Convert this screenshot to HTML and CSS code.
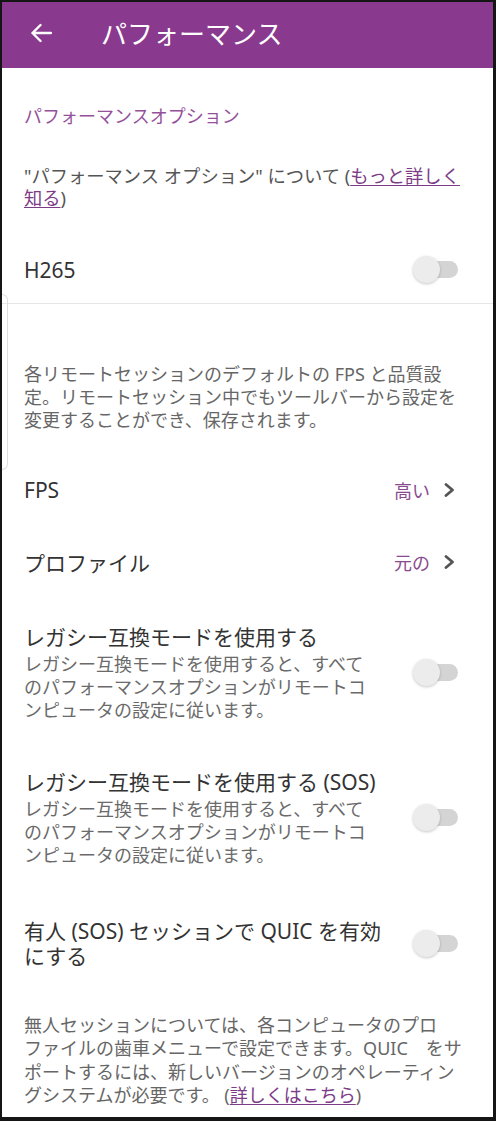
FILE: index.html
```html
<!DOCTYPE html>
<html lang="ja">
<head>
<meta charset="utf-8">
<title>パフォーマンス</title>
<link rel="stylesheet" href="styles.css">
</head>
<body>
<div class="frame">
  <header class="appbar">
    <svg class="back" width="22" height="20" viewBox="0 0 22 20" aria-hidden="true">
      <path d="M21 10H2.5M10.5 2L2.5 10l8 8" fill="none" stroke="#fff" stroke-width="2.4" stroke-linecap="round" stroke-linejoin="round"/>
    </svg>
    <h1 class="title">パフォーマンス</h1>
  </header>

  <main class="content">
    <div class="section-head">パフォーマンスオプション</div>
    <p class="about">"パフォーマンス オプション" について (<a class="link" href="#">もっと詳しく<br>知る</a>)</p>

    <div class="row row-h265">
      <span class="row-label">H265</span>
      <span class="toggle"><span class="track"></span><span class="thumb"></span></span>
    </div>
  </main>

  <div class="divider"></div>
  <div class="ghost-card"></div>

  <main class="content">
    <p class="para para-fps">各リモートセッションのデフォルトの FPS と品質設<br>定。リモートセッション中でもツールバーから設定を<br>変更することができ、保存されます。</p>

    <div class="row row-nav row-fps">
      <span class="row-label">FPS</span>
      <span class="nav-value">高い<svg class="chev" width="11" height="14" viewBox="0 0 11 14" aria-hidden="true"><path d="M2 1.5L8.5 7 2 12.5" fill="none" stroke="#555" stroke-width="2.8" stroke-linecap="round" stroke-linejoin="round"/></svg></span>
    </div>
    <div class="row row-nav row-profile">
      <span class="row-label">プロファイル</span>
      <span class="nav-value">元の<svg class="chev" width="11" height="14" viewBox="0 0 11 14" aria-hidden="true"><path d="M2 1.5L8.5 7 2 12.5" fill="none" stroke="#555" stroke-width="2.8" stroke-linecap="round" stroke-linejoin="round"/></svg></span>
    </div>

    <div class="opt opt-legacy">
      <div class="opt-text">
        <div class="opt-title">レガシー互換モードを使用する</div>
        <div class="opt-desc">レガシー互換モードを使用すると、すべて<br>のパフォーマンスオプションがリモートコ<br>ンピュータの設定に従います。</div>
      </div>
      <span class="toggle"><span class="track"></span><span class="thumb"></span></span>
    </div>

    <div class="opt opt-sos">
      <div class="opt-text">
        <div class="opt-title">レガシー互換モードを使用する (SOS)</div>
        <div class="opt-desc">レガシー互換モードを使用すると、すべて<br>のパフォーマンスオプションがリモートコ<br>ンピュータの設定に従います。</div>
      </div>
      <span class="toggle"><span class="track"></span><span class="thumb"></span></span>
    </div>

    <div class="opt opt-quic">
      <div class="opt-text">
        <div class="opt-title opt-title-wrap">有人 (SOS) セッションで QUIC を有効<br>にする</div>
      </div>
      <span class="toggle"><span class="track"></span><span class="thumb"></span></span>
    </div>

    <p class="para para-final">無人セッションについては、各コンピュータのプロ<br>ファイルの歯車メニューで設定できます。QUIC　をサ<br>ポートするには、新しいバージョンのオペレーティン<br>グシステムが必要です。 (<a class="link" href="#">詳しくはこちら</a>)</p>
  </main>
</div>
</body>
</html>
```

FILE: styles.css
```css
* { box-sizing: border-box; }

html, body {
  margin: 0;
  padding: 0;
  background: #fff;
}

body {
  font-family: "Noto Sans", "Noto Sans CJK JP", sans-serif;
  font-weight: 400;
  color: #333;
}

.frame {
  position: relative;
  width: 496px;
  height: 1121px;
  border-style: solid;
  border-color: #151515;
  border-width: 2px 3px 4px 2px;
  overflow: hidden;
  background: #fff;
}

.appbar {
  height: 66px;
  background: #893a8e;
  display: flex;
  align-items: center;
  padding-left: 28px;
}

.back {
  display: block;
  margin-top: -4px;
}

.title {
  margin: -3px 0 0 49px;
  font-size: 26px;
  font-weight: 400;
  color: #fff;
  line-height: 30px;
}

.content {
  display: block;
  padding: 0 31px 0 22px;
}

.section-head {
  margin-top: 36px;
  font-size: 18px;
  line-height: 24px;
  color: #95509b;
}

.about {
  margin: 37px 0 0;
  font-size: 18.3px;
  line-height: 22px;
  color: #555;
}

.link {
  color: #7d3c87;
  text-decoration: underline;
  text-underline-offset: 2px;
}

.row {
  display: flex;
  align-items: center;
  justify-content: space-between;
  height: 56px;
}

.row-label {
  font-size: 21px;
  color: #333;
}

.row-h265 {
  margin-top: 33px;
}

.divider {
  margin-top: 5px;
  height: 1px;
  background: #e6e6e6;
}

.ghost-card {
  position: absolute;
  left: 0;
  top: 292px;
  width: 6px;
  height: 176px;
  border: 1px solid #dedede;
  border-left: none;
  border-radius: 0 7px 7px 0;
}

.para {
  margin: 0;
  font-size: 18px;
  line-height: 23px;
  color: #666;
}

.para-fps {
  margin-top: 59px;
}

.row-fps {
  margin-top: 30px;
}

.row-profile {
  margin-top: 16px;
}

.nav-value {
  display: flex;
  align-items: center;
  gap: 14px;
  font-size: 18px;
  color: #8a4a90;
  margin-right: 7px;
}

.chev {
  display: block;
}

.toggle {
  position: relative;
  display: block;
  width: 45px;
  height: 28px;
  margin-right: 4px;
  flex: none;
}

.track {
  position: absolute;
  right: 0;
  top: 5px;
  width: 40px;
  height: 17px;
  border-radius: 9px;
  background: #d4d4d4;
}

.thumb {
  position: absolute;
  left: 0;
  top: 0;
  width: 27px;
  height: 27px;
  border-radius: 50%;
  background: #ececec;
  box-shadow: 0 1px 3px rgba(0, 0, 0, 0.22);
}

.opt {
  display: flex;
  align-items: center;
  justify-content: space-between;
}

.opt-title {
  font-size: 21px;
  line-height: 28px;
  color: #333;
}

.opt-desc {
  margin-top: 2px;
  font-size: 18px;
  line-height: 23px;
  color: #6a6a6a;
}

.opt-legacy {
  margin-top: 33px;
}

.opt-sos {
  margin-top: 46px;
}

.opt-quic {
  margin-top: 52px;
}

.opt-title-wrap {
  line-height: 25px;
}

.para-final {
  margin-top: 45px;
  line-height: 23.4px;
}
```
